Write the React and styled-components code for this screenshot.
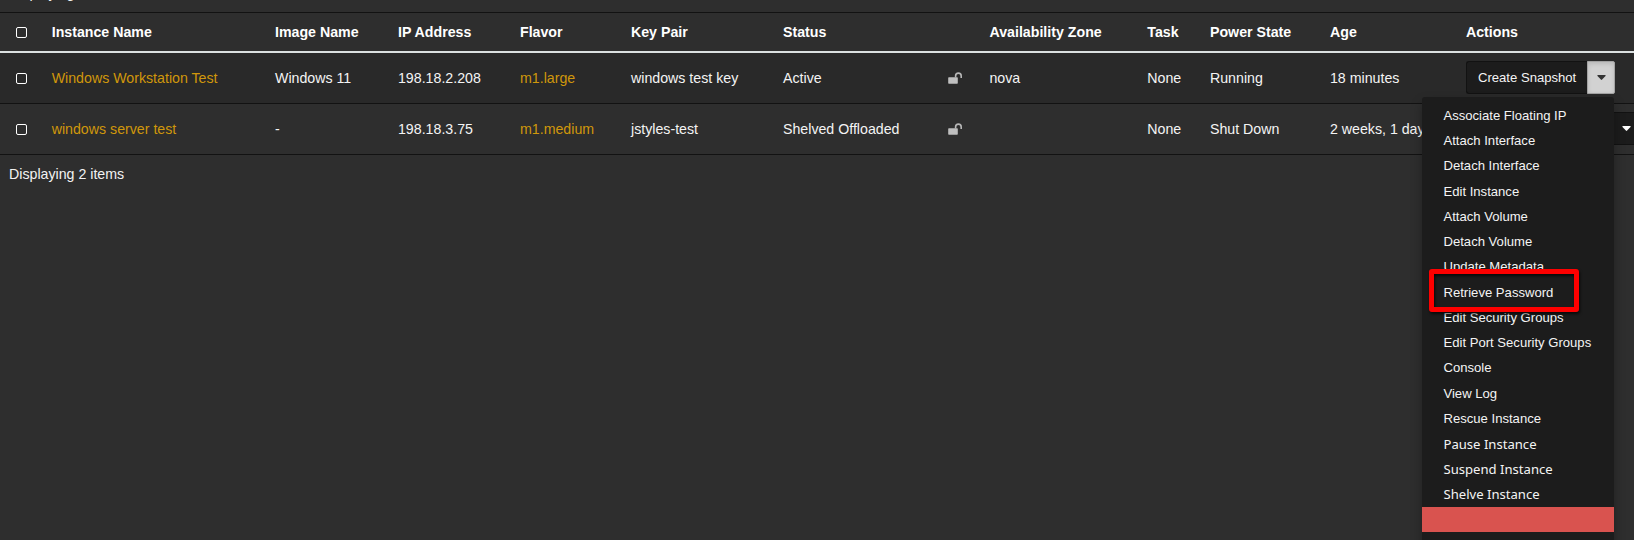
import React from "react";
import styled, { createGlobalStyle } from "styled-components";

const GlobalStyle = createGlobalStyle`
  *, *::before, *::after { box-sizing: border-box; }
  html, body { margin: 0; background: #2e2e2e; }
  body {
    height: 540px;
    overflow: hidden;
    color: #fff;
    font: 14.2px/20px "Liberation Sans", Arial, sans-serif;
  }
`;

const Page = styled.main`
  width: 1634px;
  height: 540px;
  overflow: hidden;
`;

const Count = styled.div`
  height: 20px;
  padding-left: 9px;
  margin-top: ${(p) => (p.$top ? "-17px" : "9px")};
  margin-bottom: ${(p) => (p.$top ? "9px" : "0")};
  color: #f2f2f2;
`;

const Row = styled.div`
  display: grid;
  grid-template-columns: 51.7px 223.3px 123px 122px 111px 152px 165px 41.5px 157.8px 62.7px 120px 136px 200px;
  align-items: center;
  height: 51px;
  background: ${(p) => (p.$striped ? "#292929" : "transparent")};
  border-bottom: 1px solid #121212;
`;

const HeadRow = styled(Row)`
  height: 41px;
  border-top: 1px solid #121212;
  border-bottom: 2px solid #dbe0e0;
  font-weight: bold;
`;

const Cell = styled.div`
  white-space: nowrap;
  color: ${(p) => (p.$head ? "#fff" : "#f4f4f4")};
`;

const NameLink = styled.a`
  color: #d0970b;
`;

const Checkbox = styled.span`
  display: block;
  width: 11px;
  height: 11px;
  margin-left: 16px;
  border: 1px solid #fff;
  border-radius: 2px;
`;

const LockSvg = styled.svg`
  display: block;
  margin-top: -1px;
`;

const ButtonGroup = styled.div`
  position: relative;
  display: flex;
  width: ${(p) => p.$width}px;
  height: 33px;
  margin-bottom: 1px;
`;

const MainButton = styled.button`
  flex: 1;
  padding: 0 0 0 11px;
  text-align: left;
  font: 13.1px "Liberation Sans", Arial, sans-serif;
  white-space: nowrap;
  color: #f4f4f4;
  background: #1c1c1c;
  border: 1px solid #121212;
  border-right: 0;
  border-radius: 3px 0 0 3px;
`;

const Toggle = styled.button`
  display: flex;
  align-items: center;
  justify-content: center;
  width: 28px;
  padding: 0 0 0 1px;
  color: ${(p) => (p.$open ? "#333" : "#fff")};
  background: ${(p) => (p.$open ? "#d2d2d2" : "#1c1c1c")};
  border: 1px solid ${(p) => (p.$open ? "#a3a3a3" : "#121212")};
  border-left-color: ${(p) => (p.$open ? "#a3a3a3" : "#1c1c1c")};
  border-radius: 0 2px 2px 0;
  box-shadow: ${(p) => (p.$open ? "inset 0 2px 4px rgba(0, 0, 0, 0.12)" : "none")};
`;

const CaretSvg = styled.svg`
  display: block;
`;

const Menu = styled.ul`
  position: absolute;
  z-index: 2;
  top: 36px;
  right: 1px;
  width: 192px;
  height: 480px;
  margin: 0;
  padding: 5.8px 0 0;
  list-style: none;
  background: #1c1c1c;
  border-radius: 3px;
  box-shadow: 0 6px 12px rgba(0, 0, 0, 0.3);
`;

const MenuItem = styled.li`
  height: 25.25px;
  padding-left: 21.5px;
  line-height: 25.25px;
  font-size: 13.1px;
  font-family: "Liberation Sans", sans-serif;
  color: #f4f4f4;
  background: ${(p) => (p.$danger ? "#d9534f" : "transparent")};
`;

const PowerMenuItem = styled(MenuItem)`
  font-family: "Noto Sans", sans-serif;
  line-height: ${(p) => (p.$last ? "25.25px" : "26.25px")};
`;

const Highlight = styled.div`
  position: absolute;
  z-index: 3;
  top: 208px;
  right: 36px;
  width: 150px;
  height: 43px;
  border: 5px solid #fe0000;
  border-radius: 3px;
  box-shadow: 1px 2px 3px rgba(0, 0, 0, 0.7), inset 1px 2px 3px rgba(0, 0, 0, 0.7);
`;

const headings = [
  "Instance Name", "Image Name", "IP Address", "Flavor", "Key Pair", "Status", "",
  "Availability Zone", "Task", "Power State", "Age", "Actions",
];

const instances = [
  {
    name: "Windows Workstation Test", image: "Windows 11", ip: "198.18.2.208", flavor: "m1.large",
    keyPair: "windows test key", status: "Active", zone: "nova", power: "Running",
    age: "18 minutes", action: "Create Snapshot", open: true,
  },
  {
    name: "windows server test", image: "-", ip: "198.18.3.75", flavor: "m1.medium",
    keyPair: "jstyles-test", status: "Shelved Offloaded", zone: "", power: "Shut Down",
    age: "2 weeks, 1 day", action: "", open: false,
  },
];

const menuItems = [
  "Associate Floating IP", "Attach Interface", "Detach Interface", "Edit Instance",
  "Attach Volume", "Detach Volume", "Update Metadata", "Retrieve Password",
  "Edit Security Groups", "Edit Port Security Groups", "Console", "View Log", "Rescue Instance",
];

const powerItems = ["Pause Instance", "Suspend Instance", "Shelve Instance"];

function UnlockIcon() {
  return (
    <LockSvg width="14" height="12" viewBox="0 0 14 12">
      <rect x="0.2" y="5.2" width="9.6" height="6.5" rx="0.7" fill="#bfbfbf" />
      <path d="M7.6 5.6V3.9a2.8 2.8 0 0 1 5.6 0V6" fill="none" stroke="#b6b6b6" strokeWidth="1.6" />
    </LockSvg>
  );
}

function Caret() {
  return (
    <CaretSvg width="9" height="5" viewBox="0 0 9 5">
      <path d="M0.9 0h7.2q.9.2.4.9L5.1 4.6q-.6.6-1.2 0L.5.9Q0 .2.9 0z" fill="currentColor" />
    </CaretSvg>
  );
}

function ActionsMenu() {
  return (
    <Menu>
      {menuItems.map((t) => <MenuItem key={t}>{t}</MenuItem>)}
      {powerItems.map((t, i) => (
        <PowerMenuItem key={t} $last={i === powerItems.length - 1}>{t}</PowerMenuItem>
      ))}
      <MenuItem $danger />
    </Menu>
  );
}

function InstanceRow({ item }) {
  return (
    <Row $striped={item.open}>
      <Checkbox />
      <Cell><NameLink>{item.name}</NameLink></Cell>
      <Cell>{item.image}</Cell>
      <Cell>{item.ip}</Cell>
      <Cell><NameLink>{item.flavor}</NameLink></Cell>
      <Cell>{item.keyPair}</Cell>
      <Cell>{item.status}</Cell>
      <UnlockIcon />
      <Cell>{item.zone}</Cell>
      <Cell>None</Cell>
      <Cell>{item.power}</Cell>
      <Cell>{item.age}</Cell>
      <ButtonGroup $width={item.open ? 149 : 174}>
        <MainButton>{item.action}</MainButton>
        <Toggle $open={item.open}><Caret /></Toggle>
        {item.open && <ActionsMenu />}
        {item.open && <Highlight />}
      </ButtonGroup>
    </Row>
  );
}

export default function App() {
  return (
    <Page>
      <GlobalStyle />
      <Count $top>Displaying 2 items</Count>
      <HeadRow>
        <Checkbox />
        {headings.map((h, i) => <Cell key={i} $head>{h}</Cell>)}
      </HeadRow>
      {instances.map((item) => <InstanceRow key={item.name} item={item} />)}
      <Count>Displaying 2 items</Count>
    </Page>
  );
}
